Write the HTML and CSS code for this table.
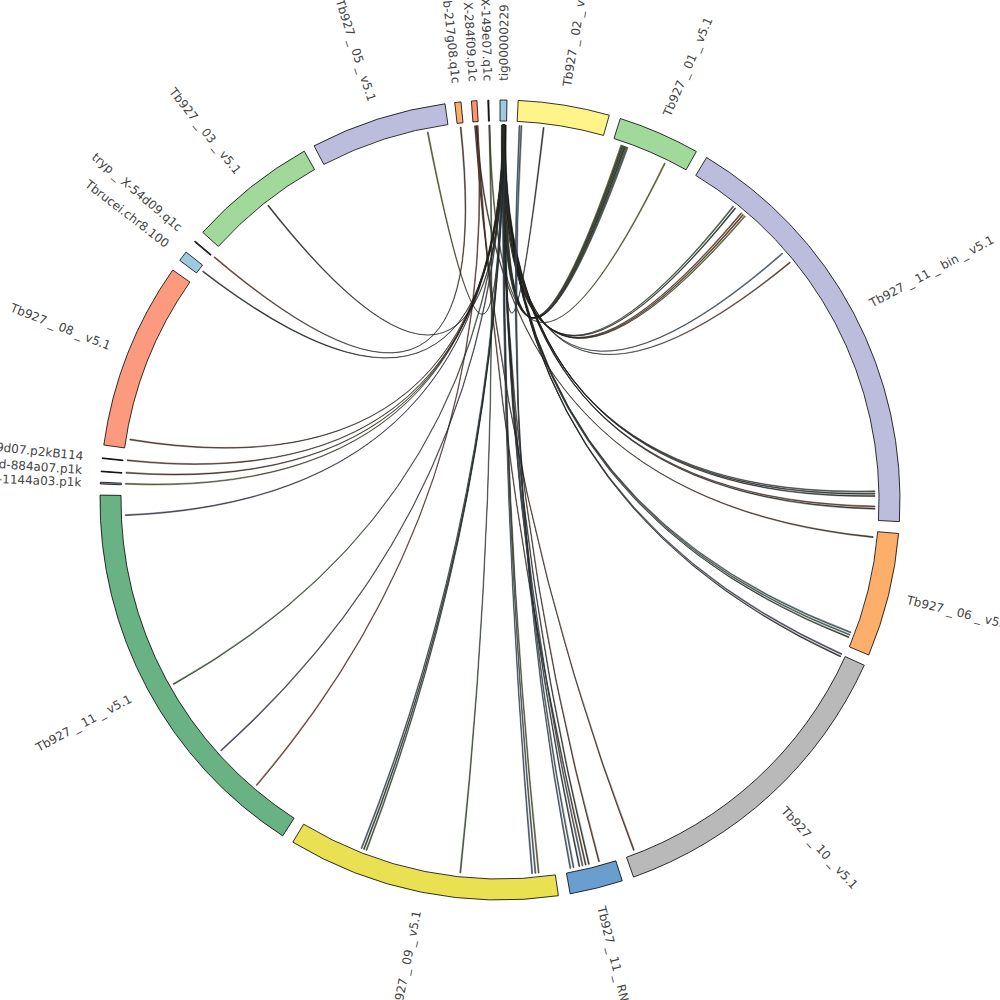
FILE: index.html
```html
<!DOCTYPE html>
<html>
<head>
<meta charset="utf-8">
<title>Chord diagram</title>
<link rel="stylesheet" href="styles.css">
</head>
<body>
<svg id="chart" class="chart" width="1000" height="1000" viewBox="0 0 1000 1000">
  <g id="chords" class="chords"></g>
  <g id="segments" class="segments"></g>
  <g class="labels">
    <text class="label" transform="translate(500 500) rotate(-89.5) translate(419 0)">tig00000229</text>
    <text class="label" transform="translate(500 500) rotate(-80.8) translate(419 0)">Tb927 _ 02 _ v5.1</text>
    <text class="label" transform="translate(500 500) rotate(-66.55) translate(419 0)">Tb927 _ 01 _ v5.1</text>
    <text class="label" transform="translate(500 500) rotate(-27.9) translate(419 0)">Tb927 _ 11 _ bin _ v5.1</text>
    <text class="label" transform="translate(500 500) rotate(13.8) translate(419 0)">Tb927 _ 06 _ v5.1</text>
    <text class="label" transform="translate(500 500) rotate(47.45) translate(419 0)">Tb927 _ 10 _ v5.1</text>
    <text class="label" transform="translate(500 500) rotate(76.05) translate(419 0)">Tb927 _ 11 _ RNA _ v5.1</text>
    <text class="label end" transform="translate(500 500) rotate(101.4) translate(419 0) rotate(180)">Tb927 _ 09 _ v5.1</text>
    <text class="label end" transform="translate(500 500) rotate(151.8) translate(419 0) rotate(180)">Tb927 _ 11 _ v5.1</text>
    <text class="label end" transform="translate(500 500) rotate(182.4) translate(419 0) rotate(180)">tryp _ X-1144a03.p1k</text>
    <text class="label end" transform="translate(500 500) rotate(184.1) translate(419 0) rotate(180)">tryp _ Xd-884a07.p1k</text>
    <text class="label end" transform="translate(500 500) rotate(186) translate(419 0) rotate(180)">tryp _ X-9d07.p2kB114</text>
    <text class="label end" transform="translate(500 500) rotate(201.5) translate(419 0) rotate(180)">Tb927 _ 08 _ v5.1</text>
    <text class="label end" transform="translate(500 500) rotate(217.5) translate(419 0) rotate(180)">Tbrucei.chr8.100</text>
    <text class="label end" transform="translate(500 500) rotate(220.3) translate(419 0) rotate(180)">tryp _ X-54d09.q1c</text>
    <text class="label end" transform="translate(500 500) rotate(231.35) translate(419 0) rotate(180)">Tb927 _ 03 _ v5.1</text>
    <text class="label end" transform="translate(500 500) rotate(252.2) translate(419 0) rotate(180)">Tb927 _ 05 _ v5.1</text>
    <text class="label end" transform="translate(500 500) rotate(263.95) translate(419 0) rotate(180)">tryp _ b-217g08.q1c</text>
    <text class="label end" transform="translate(500 500) rotate(266.3) translate(419 0) rotate(180)">tryp _ X-284f09.p1c</text>
    <text class="label end" transform="translate(500 500) rotate(268.3) translate(419 0) rotate(180)">tryp _ X-149e07.q1c</text>
  </g>
</svg>
<script src="script.js"></script>
</body>
</html>
```

FILE: styles.css
```css
html, body {
  margin: 0;
  padding: 0;
  background: #ffffff;
}

.chart {
  display: block;
  width: 1000px;
  height: 1000px;
  overflow: hidden;
}

.segment {
  stroke: #000000;
  stroke-width: 0.8;
  stroke-linejoin: miter;
}

.chord {
  stroke: #111111;
  stroke-width: 0.45;
}

.label {
  font-family: "DejaVu Sans", "Liberation Sans", sans-serif;
  font-size: 12px;
  fill: #444444;
  text-anchor: start;
  dominant-baseline: central;
}

.label.end {
  text-anchor: end;
}
```

FILE: script.js
```js
(function () {
  var NS = "http://www.w3.org/2000/svg";
  var CX = 500, CY = 500, R_IN = 379, R_OUT = 400, R_CH = 375;

  function pt(a, r) {
    var t = a * Math.PI / 180;
    return [CX + r * Math.sin(t), CY - r * Math.cos(t)];
  }
  function f(p) { return p[0].toFixed(2) + " " + p[1].toFixed(2); }

  var segments = [
    [0.0, 1.0, "#9ecae1"],
    [2.6, 15.85, "#fff48a"],
    [17.5, 29.4, "#a1d99b"],
    [31.1, 93.1, "#bcbddc"],
    [94.8, 112.8, "#fdae6b"],
    [114.4, 160.5, "#b9b9b9"],
    [162.2, 169.9, "#6a9ecf"],
    [171.6, 211.2, "#e9e052"],
    [212.9, 270.7, "#69b283"],
    [272.3, 272.55, "#8a88c8"],
    [274.05, 274.15, "#222222"],
    [275.95, 276.05, "#222222"],
    [277.9, 305.1, "#fc9a80"],
    [306.8, 308.3, "#9ecae1"],
    [310.2, 310.35, "#444444"],
    [312.0, 330.7, "#a1d99b"],
    [332.3, 352.1, "#bcbddc"],
    [353.5, 354.4, "#fdae6b"],
    [355.9, 356.7, "#fc9272"],
    [358.25, 358.4, "#222222"]
  ];

  var C = {
    dk: "#3a4a3e", br: "#7a4a30", rb: "#a9553a", bl: "#5a7ea0",
    gr: "#55804f", ol: "#8a8a38", pu: "#625a8a", gy: "#7a7a7a"
  };

  var chords = [
    [6.6, 0.5, C.dk],
    [348.8, 0.3, C.ol],
    [18.8, 0.2, C.ol], [19.0, 0.4, C.dk], [19.2, 0.6, C.gr], [19.4, 0.8, C.dk], [19.6, 0.5, C.ol], [19.8, 0.3, C.bl],
    [26.0, 358.3, C.ol],
    [38.4, 0.4, C.gr], [38.8, 0.6, C.dk], [40.0, 0.5, C.rb], [40.35, 0.7, C.br], [40.7, 0.3, C.ol],
    [48.8, 0.5, C.bl], [50.6, 0.4, C.br],
    [88.6, 0.5, C.gy], [88.95, 0.6, C.dk], [89.3, 0.7, C.dk], [90.9, 0.4, C.rb], [91.25, 0.5, C.dk],
    [95.6, 356.3, C.br],
    [110.6, 0.5, C.bl], [111.0, 0.6, C.gr], [111.4, 0.4, C.dk],
    [114.2, 0.5, C.pu], [114.6, 0.6, C.dk],
    [159.0, 356.1, C.br],
    [164.6, 0.4, C.br],
    [166.2, 0.5, C.dk], [166.7, 356.4, C.br], [167.2, 0.6, C.bl], [167.7, 0.5, C.dk],
    [168.6, 2.9, C.bl], [169.1, 3.2, C.bl],
    [174.0, 0.5, C.ol], [174.5, 0.6, C.bl], [175.0, 0.4, C.bl],
    [186.0, 358.3, C.gr],
    [200.8, 0.5, C.gr], [201.2, 0.6, C.dk], [201.6, 0.4, C.bl],
    [220.4, 356.5, C.rb],
    [228.0, 0.5, C.pu],
    [240.5, 0.6, C.gr],
    [267.6, 0.5, C.pu],
    [272.4, 0.4, C.ol], [274.1, 0.5, C.br], [276.0, 0.6, C.br],
    [279.2, 0.5, C.br],
    [307.5, 0.4, C.dk], [310.3, 353.9, C.br],
    [321.7, 0.5, C.dk]
  ];

  var segG = document.getElementById("segments");
  segments.forEach(function (s) {
    var a0 = s[0], a1 = s[1];
    var large = (a1 - a0) > 180 ? 1 : 0;
    var d = "M" + f(pt(a0, R_OUT)) +
      " A" + R_OUT + " " + R_OUT + " 0 " + large + " 1 " + f(pt(a1, R_OUT)) +
      " L" + f(pt(a1, R_IN)) +
      " A" + R_IN + " " + R_IN + " 0 " + large + " 0 " + f(pt(a0, R_IN)) + " Z";
    var p = document.createElementNS(NS, "path");
    p.setAttribute("d", d);
    p.setAttribute("class", "segment");
    p.setAttribute("fill", s[2]);
    segG.appendChild(p);
  });

  var chG = document.getElementById("chords");
  var W = 0.16;
  chords.forEach(function (c) {
    var a = c[0], b = c[1];
    var s0 = pt(a, R_CH), s1 = pt(a + W, R_CH);
    var t0 = pt(b, R_CH), t1 = pt(b + W, R_CH);
    var d = "M" + f(s0) +
      " A" + R_CH + " " + R_CH + " 0 0 1 " + f(s1) +
      " Q" + CX + " " + CY + " " + f(t0) +
      " A" + R_CH + " " + R_CH + " 0 0 1 " + f(t1) +
      " Q" + CX + " " + CY + " " + f(s0) + " Z";
    var p = document.createElementNS(NS, "path");
    p.setAttribute("d", d);
    p.setAttribute("class", "chord");
    p.setAttribute("fill", c[2]);
    chG.appendChild(p);
  });
})();
```
